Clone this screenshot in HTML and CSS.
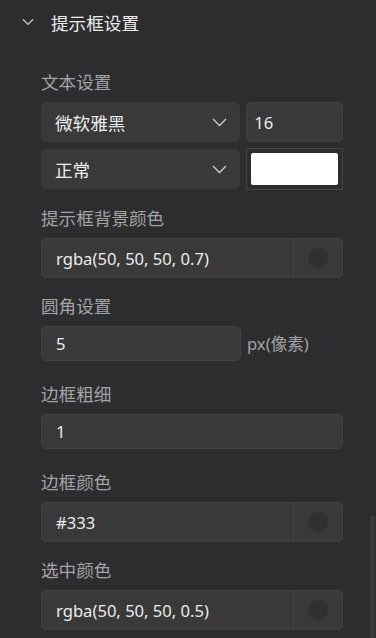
FILE: index.html
```html
<!DOCTYPE html>
<html lang="zh-CN">
<head>
<meta charset="utf-8">
<link rel="stylesheet" href="styles.css">
</head>
<body>
<div class="panel">
  <div class="header">
    <svg class="chev-head" width="12" height="8" viewBox="0 0 12 8"><path d="M1 1.2 L6 6.4 L11 1.2" fill="none" stroke="#c8c8c8" stroke-width="1.3"/></svg>
    <span class="title">提示框设置</span>
  </div>
  <div class="body">
    <div class="field">
      <div class="label">文本设置</div>
      <div class="row">
        <div class="select"><span>微软雅黑</span><svg width="15" height="9" viewBox="0 0 15 9"><path d="M1 1 L7.5 7.5 L14 1" fill="none" stroke="#d0d0d0" stroke-width="1.3"/></svg></div>
        <div class="num latin">16</div>
      </div>
      <div class="row row2">
        <div class="select"><span>正常</span><svg width="15" height="9" viewBox="0 0 15 9"><path d="M1 1 L7.5 7.5 L14 1" fill="none" stroke="#d0d0d0" stroke-width="1.3"/></svg></div>
        <div class="swatch"><div class="swatch-inner"></div></div>
      </div>
    </div>
    <div class="field">
      <div class="label">提示框背景颜色</div>
      <div class="color-input"><span class="val latin">rgba(50, 50, 50, 0.7)</span><span class="picker"><i class="dot"></i></span></div>
    </div>
    <div class="field">
      <div class="label">圆角设置</div>
      <div class="row short">
        <div class="input half latin">5</div>
        <span class="unit">px(像素)</span>
      </div>
    </div>
    <div class="field">
      <div class="label">边框粗细</div>
      <div class="short"><div class="input latin">1</div></div>
    </div>
    <div class="field">
      <div class="label">边框颜色</div>
      <div class="color-input"><span class="val latin">#333</span><span class="picker"><i class="dot"></i></span></div>
    </div>
    <div class="field">
      <div class="label">选中颜色</div>
      <div class="color-input"><span class="val latin">rgba(50, 50, 50, 0.5)</span><span class="picker"><i class="dot"></i></span></div>
    </div>
  </div>
  <div class="scrollbar"></div>
</div>
</body>
</html>
```

FILE: styles.css
```css
html, body {
  margin: 0;
  padding: 0;
  background: #2c2d2f;
}
body {
  font-family: "Noto Sans", "Noto Sans CJK SC", sans-serif;
  font-size: 17.6px;
}
.panel {
  position: relative;
  width: 376px;
  height: 638px;
  overflow: hidden;
  background: #2c2d2f;
}
.header {
  height: 44px;
  display: flex;
  align-items: center;
}
.chev-head {
  margin-left: 22px;
  margin-right: 17px;
}
.title {
  color: #ececec;
  font-size: 17.6px;
}
.body {
  padding: 26px 0 0 41px;
  width: 302px;
}
.field {
  margin-bottom: 16px;
}
.label {
  color: #a3a3a3;
  line-height: 24px;
  height: 24px;
  margin-bottom: 8px;
}
.latin {
  font-size: 16.6px;
}
.row {
  display: flex;
  gap: 6px;
}
.row2 {
  margin-top: 7px;
}
.select {
  box-sizing: border-box;
  width: 200px;
  height: 40px;
  background: #383938;
  border-radius: 5px;
  display: flex;
  align-items: center;
  justify-content: space-between;
  padding: 0 13px 0 14px;
  color: #ececec;
}
.select svg {
  margin-top: 1px;
}
.num {
  box-sizing: border-box;
  width: 97px;
  height: 40px;
  background: #383938;
  border: 1px solid #424343;
  border-radius: 5px;
  padding-left: 7px;
  display: flex;
  align-items: center;
  color: #ececec;
}
.swatch {
  box-sizing: border-box;
  width: 97px;
  height: 42px;
  margin-top: -1px;
  border: 1px solid #444545;
  padding: 4px;
}
.swatch-inner {
  background: #ffffff;
  border-radius: 2px;
  height: 100%;
}
.color-input {
  box-sizing: border-box;
  height: 40px;
  background: #383938;
  border: 1px solid #424343;
  border-radius: 5px;
  display: flex;
  align-items: center;
  color: #ececec;
}
.val {
  flex: 1;
  padding-left: 14px;
}
.picker {
  width: 48px;
  height: 100%;
  border-left: 1px solid #454646;
  display: flex;
  align-items: center;
  justify-content: center;
}
.dot {
  width: 20px;
  height: 20px;
  border-radius: 50%;
  background: #2f3031;
}
.short {
  height: 40px;
}
.row.short {
  align-items: flex-start;
}
.input {
  box-sizing: border-box;
  height: 35px;
  background: #383938;
  border: 1px solid #424343;
  border-radius: 5px;
  display: flex;
  align-items: center;
  padding-left: 14px;
  color: #ececec;
}
.input.half {
  width: 200px;
}
.unit {
  color: #a3a3a3;
  line-height: 35px;
  font-size: 16.6px;
}
.scrollbar {
  position: absolute;
  right: 1px;
  top: 516px;
  width: 5px;
  height: 130px;
  background: #3a3b3c;
}
```
